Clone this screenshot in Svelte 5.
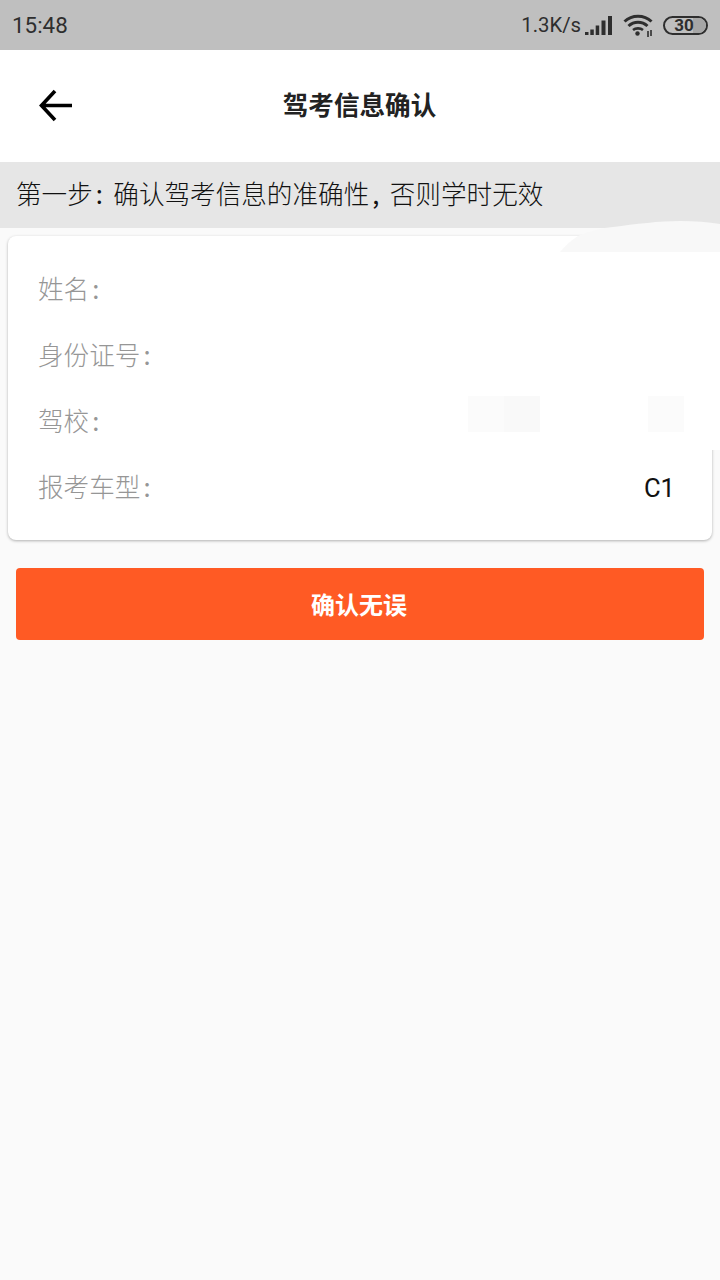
<script>
  const rows = [
    { label: '姓名', value: '' },
    { label: '身份证号', value: '' },
    { label: '驾校', value: '' },
    { label: '报考车型', value: 'C1' }
  ];
</script>

<div class="page">
  <div class="status">
    <span class="time">15:48</span>
    <div class="status-right">
      <span class="speed">1.3K/s</span>
      <svg class="signal" width="28" height="19" viewBox="0 0 28 19">
        <rect x="0" y="16" width="3.500" height="3" fill="#2e2e2e"/>
        <rect x="5.300" y="13.500" width="3.500" height="5.500" fill="#2e2e2e"/>
        <rect x="10.700" y="9.500" width="3.500" height="9.500" fill="#2e2e2e"/>
        <rect x="16.500" y="4.500" width="4" height="14.500" fill="#2e2e2e"/>
        <rect x="23" y="0" width="4" height="19" fill="#2e2e2e"/>
      </svg>
      <svg class="wifi" width="30" height="24" viewBox="0 0 30 24">
        <path d="M1.500 8.500C9 1.500 21 1.500 28.500 8.500" fill="none" stroke="#2e2e2e" stroke-width="3"/>
        <path d="M5.500 13C11 8 19 8 24.500 13" fill="none" stroke="#2e2e2e" stroke-width="3"/>
        <path d="M10 17C12.800 14.800 17.200 14.800 20 17" fill="none" stroke="#2e2e2e" stroke-width="2.600"/>
        <circle cx="14.500" cy="20.500" r="2.200" fill="#2e2e2e"/>
        <path d="M25 18v6M28 17v6" stroke="#2e2e2e" stroke-width="1.600"/>
      </svg>
      <div class="battery"><span class="fill"></span><span class="level">30</span></div>
    </div>
  </div>

  <header class="nav">
    <svg class="back" width="36" height="36" viewBox="0 0 36 36">
      <path d="M34 17.500H4M17 3L3.500 17.500 17 32" fill="none" stroke="#000" stroke-width="3.600"/>
    </svg>
    <h1>驾考信息确认</h1>
  </header>

  <div class="notice">
    <span>第一步<span class="punct">:</span>确认驾考信息的准确性<span class="punct">,</span>否则学时无效</span>
  </div>

  <section class="card">
    {#each rows as row}
      <div class="row">
        <span class="label">{row.label}<span class="punct">:</span></span>
        <span class="value">{row.value}</span>
      </div>
    {/each}
  </section>

  <button class="confirm"><span>确认无误</span></button>

  <div class="mask" aria-hidden="true">
    <svg class="wave" width="160" height="32" viewBox="0 0 160 32">
      <path d="M0 32C6 25 14 18 20 15C30 11 42 8 53 7C75 4 100 1 120 1C135 1 148 2 160 4V32Z" fill="#f8f8f8"/>
    </svg>
    <div class="blank"></div>
    <div class="patch p1"></div>
    <div class="patch p2"></div>
    <div class="patch p3"></div>
  </div>
</div>

<style>
  :global(body) {
    margin: 0;
    background: #fafafa;
  }
  .page {
    position: relative;
    width: 720px;
    height: 1280px;
    overflow: hidden;
    background: #fafafa;
    font-family: "Noto Sans CJK SC", Roboto, sans-serif;
  }
  .status {
    height: 50px;
    background: #bfbfbf;
    color: #2e2e2e;
    display: flex;
    align-items: center;
    justify-content: space-between;
    padding: 0 12px;
    box-sizing: border-box;
    font-family: Roboto, sans-serif;
    font-size: 22.400px;
  }
  .status-right {
    display: flex;
    align-items: center;
  }
  .speed {
    font-size: 20.300px;
    margin-right: 4px;
  }
  .signal {
    margin-right: 10px;
  }
  .wifi {
    margin-right: 10px;
  }
  .battery {
    position: relative;
    width: 45px;
    height: 19px;
    border: 2px solid #2e2e2e;
    border-radius: 10px;
    box-sizing: border-box;
    display: flex;
    align-items: center;
    justify-content: center;
    overflow: hidden;
  }
  .fill {
    position: absolute;
    right: 0;
    top: 0;
    bottom: 0;
    width: 13px;
    background: #a6a6a6;
  }
  .level {
    position: relative;
    font-size: 17px;
    font-weight: 700;
    line-height: 1;
    margin-right: 3px;
  }
  .nav {
    height: 112px;
    background: #fff;
    position: relative;
    display: flex;
    align-items: center;
    justify-content: center;
  }
  .back {
    position: absolute;
    left: 38px;
    top: 38px;
  }
  h1 {
    margin: 0 1px 5px 0;
    font-size: 25.600px;
    font-weight: 700;
    color: #222;
  }
  .notice {
    height: 66px;
    box-sizing: border-box;
    padding: 0 0 6px 16px;
    background: #e6e6e6;
    display: flex;
    align-items: center;
    font-size: 25.600px;
    font-weight: 300;
    color: #111;
  }
  .punct {
    display: inline-block;
    box-sizing: border-box;
    width: 20.500px;
    padding-left: 3px;
    font-weight: 400;
  }
  .card {
    margin: 8px 8px 0;
    height: 304px;
    box-sizing: border-box;
    padding-top: 21px;
    background: #fff;
    border-radius: 8px;
    box-shadow: 0 1px 3px rgba(0, 0, 0, 0.3);
  }
  .row {
    height: 66px;
    padding: 0 37px 0 30px;
    display: flex;
    align-items: center;
    justify-content: space-between;
    font-size: 25.600px;
  }
  .label {
    color: #969696;
    font-weight: 300;
    margin-bottom: 6px;
  }
  .value {
    color: #111;
    font-family: Roboto, sans-serif;
  }
  .confirm {
    display: block;
    width: 688px;
    height: 72px;
    margin: 28px 16px 0;
    padding: 0 2px 2px 0;
    border: 0;
    border-radius: 4px;
    background: #ff5a24;
    color: #fff;
    font-family: inherit;
    font-size: 24px;
    font-weight: 700;
  }
  .mask {
    position: absolute;
    inset: 0;
    pointer-events: none;
  }
  .wave {
    position: absolute;
    left: 560px;
    top: 220px;
  }
  .blank {
    position: absolute;
    left: 560px;
    top: 252px;
    width: 160px;
    height: 198px;
    background: #fff;
  }
  .patch {
    position: absolute;
    top: 396px;
    width: 36px;
    height: 36px;
    background: #fbfbfb;
  }
  .p1 { left: 468px; }
  .p2 { left: 504px; background: #f9f9f9; }
  .p3 { left: 648px; }
</style>
